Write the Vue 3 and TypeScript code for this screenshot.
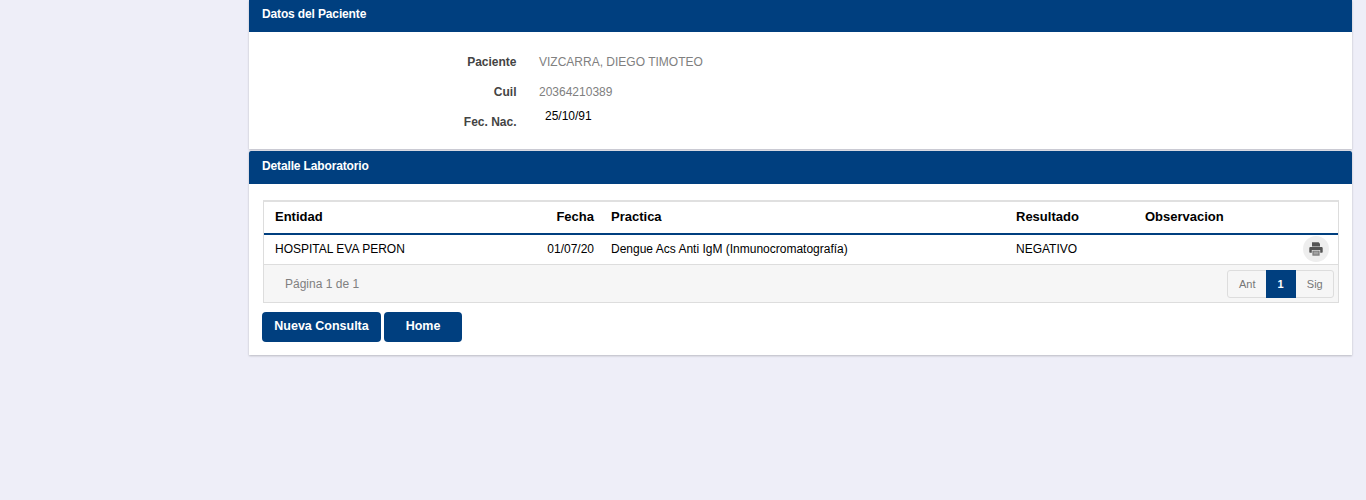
<script setup lang="ts">
interface Field { label: string; value: string; plain?: boolean }
const fields: Field[] = [
  { label: 'Paciente', value: 'VIZCARRA, DIEGO TIMOTEO' },
  { label: 'Cuil', value: '20364210389' },
  { label: 'Fec. Nac.', value: '25/10/91', plain: true },
]
</script>

<template>
  <main class="page">
    <section class="card first">
      <header class="card-head">Datos del Paciente</header>
      <div class="patient">
        <div v-for="f in fields" :key="f.label" class="field" :class="{ plain: f.plain }">
          <span class="label">{{ f.label }}</span>
          <span class="value">{{ f.value }}</span>
        </div>
      </div>
    </section>

    <section class="card second">
      <header class="card-head tall">Detalle Laboratorio</header>
      <div class="detail">
        <div class="grid">
          <div class="row head">
            <span class="c-ent">Entidad</span>
            <span class="c-date">Fecha</span>
            <span class="c-prac">Practica</span>
            <span class="c-res">Resultado</span>
            <span class="c-obs">Observacion</span>
            <span class="c-act"></span>
          </div>
          <div class="row body">
            <span class="c-ent">HOSPITAL EVA PERON</span>
            <span class="c-date">01/07/20</span>
            <span class="c-prac">Dengue Acs Anti IgM (Inmunocromatografía)</span>
            <span class="c-res">NEGATIVO</span>
            <span class="c-obs"></span>
            <span class="c-act">
              <span class="print">
                <svg width="14" height="14" viewBox="0 0 14 14" aria-hidden="true">
                  <path fill="#555" d="M3 .3h6.600L11 1.700v2.800H3z" />
                  <path fill="#555" d="M1.500 5h11c.6 0 1.200.5 1.200 1.100v3.900c0 .4-.3.700-.7.700h-1.800V8H2.800v2.700H1c-.4 0-.7-.3-.7-.7V6.100C.3 5.500.9 5 1.500 5z" />
                  <path fill="#7a7a7a" d="M3.400 8.600h7.200v5.100H3.400z" />
                  <path fill="#c8c8c8" d="M4.600 9.800h4.800v.8H4.600zM4.600 11.400h4.800v.8H4.600z" />
                </svg>
              </span>
            </span>
          </div>
          <div class="foot">
            <span class="pages">Página 1 de 1</span>
            <nav class="pager">
              <span class="pg">Ant</span>
              <span class="pg on">1</span>
              <span class="pg">Sig</span>
            </nav>
          </div>
        </div>
        <div class="actions">
          <button class="btn wide" type="button">Nueva Consulta</button>
          <button class="btn home" type="button">Home</button>
        </div>
      </div>
    </section>
  </main>
</template>

<style>
html, body { margin: 0; background: #eeeef8; }
</style>

<style scoped>
.page {
  width: 1103px;
  min-height: 500px;
  margin-left: 249px;
  font-family: "Liberation Sans", Arial, sans-serif;
  font-size: 12px;
  color: #000;
}
.card {
  background: #fff;
  box-shadow: 0 1px 2px rgba(0, 0, 0, 0.22);
}
.first { height: 149px; margin-bottom: 2px; }
.card-head {
  height: 32px;
  box-sizing: border-box;
  padding: 7px 13px 0;
  line-height: 14px;
  background: #003f7f;
  color: #fff;
  font-weight: 700;
  font-size: 12px;
  letter-spacing: -0.14px;
}
.card-head.tall { height: 33px; padding-top: 8px; border-radius: 2px 2px 0 0; }
.patient { padding-top: 15px; }
.field { display: flex; height: 30px; line-height: 30px; }
.label {
  width: 267.5px;
  text-align: right;
  font-weight: 700;
  color: #444;
}
.value { margin-left: 22.5px; color: #808080; }
.plain .value { margin-left: 28.5px; margin-top: -6px; color: #000; }
.detail { padding: 16px 13px 13px 13px; }
.grid {
  width: 1076px;
  margin-left: 1px;
  box-sizing: border-box;
  border: 1px solid #ddd;
  border-top: 2px solid #e0e0e0;
}
.row { display: flex; align-items: center; box-sizing: border-box; }
.head {
  height: 33px;
  padding-bottom: 2px;
  border-bottom: 2px solid #003f7f;
  font-size: 13px;
  font-weight: 700;
}
.body { height: 30px; padding-bottom: 2px; border-bottom: 1px solid #ddd; }
.c-ent { width: 234px; padding-left: 11px; box-sizing: content-box; }
.c-date { width: 85px; text-align: right; }
.c-prac { width: 405px; margin-left: 17px; }
.c-res { width: 129px; }
.c-obs { width: 150px; }
.c-act { flex: 1; display: flex; justify-content: flex-end; padding-right: 9px; margin-top: 1px; }
.print {
  width: 26px;
  height: 26px;
  border-radius: 50%;
  background: #eee;
  display: flex;
  align-items: center;
  justify-content: center;
}
.foot {
  height: 37px;
  background: #f6f6f6;
  display: flex;
  align-items: center;
  justify-content: space-between;
  padding: 0 4px 0 21px;
  color: #808080;
}
.pager {
  display: flex;
  height: 28px;
  width: 107px;
  box-sizing: border-box;
  border: 1px solid #ddd;
  border-radius: 3px;
  font-size: 11px;
}
.pg { flex: 1; display: flex; align-items: center; justify-content: center; padding-left: 1px; color: #777; }
.pg.on { flex: 0 0 30px; padding-left: 0; background: #003f7f; color: #fff; font-weight: 700; height: 28px; margin-top: -1px; }
.actions { display: flex; gap: 3px; margin-top: 9px; }
.btn {
  height: 30px;
  border: 0;
  border-radius: 4px;
  background: #003f7f;
  color: #fff;
  font: 700 12.5px "Liberation Sans", Arial, sans-serif;
  padding: 0 0 3px;
}
.wide { width: 119px; }
.home { width: 78px; }
</style>
